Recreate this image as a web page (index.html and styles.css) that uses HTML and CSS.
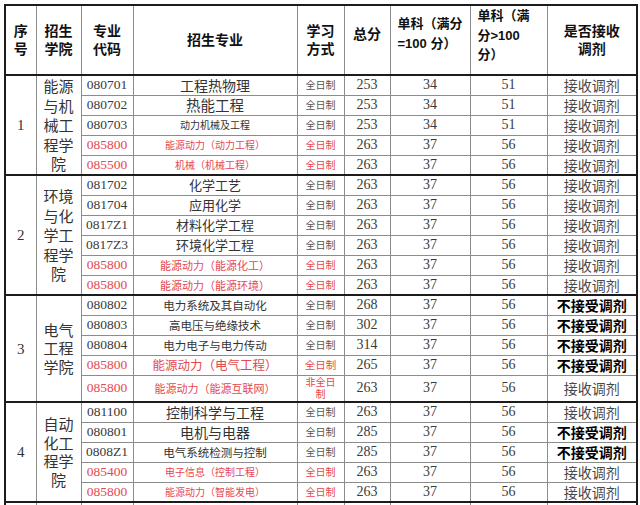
FILE: index.html
```html
<!DOCTYPE html>
<html lang="zh">
<head>
<meta charset="utf-8">
<title>招生专业调剂表</title>
<link rel="stylesheet" href="styles.css">
</head>
<body>
<table class="t">
  <colgroup>
    <col class="c1"><col class="c2"><col class="c3"><col class="c4"><col class="c5"><col class="c6"><col class="c7"><col class="c8"><col class="c9">
  </colgroup>
  <thead>
    <tr class="hd">
      <th>序<br>号</th>
      <th>招生<br>学院</th>
      <th>专业<br>代码</th>
      <th>招生专业</th>
      <th>学习<br>方式</th>
      <th class="top total">总分</th>
      <th class="top left sm two-l">单科（满分<br>=100 分）</th>
      <th class="top left sm three-l">单科（满<br>分&gt;100<br>分）</th>
      <th>是否接收<br>调剂</th>
    </tr>
  </thead>
  <tbody>
    <tr class="g">
      <td rowspan="5" class="no">1</td>
      <td rowspan="5" class="col">能源<br>与机<br>械工<br>程学<br>院</td>
      <td class="code">080701</td><td class="f14">工程热物理</td><td class="way">全日制</td><td class="num">253</td><td class="num">34</td><td class="num">51</td><td class="acc">接收调剂</td>
    </tr>
    <tr>
      <td class="code">080702</td><td class="f145">热能工程</td><td class="way">全日制</td><td class="num">253</td><td class="num">34</td><td class="num">51</td><td class="acc">接收调剂</td>
    </tr>
    <tr>
      <td class="code">080703</td><td class="f10">动力机械及工程</td><td class="way">全日制</td><td class="num">253</td><td class="num">34</td><td class="num">51</td><td class="acc">接收调剂</td>
    </tr>
    <tr>
      <td class="code red">085800</td><td class="f10 red">能源动力（动力工程）</td><td class="way red">全日制</td><td class="num">263</td><td class="num">37</td><td class="num">56</td><td class="acc">接收调剂</td>
    </tr>
    <tr>
      <td class="code red">085500</td><td class="f10 red">机械（机械工程）</td><td class="way red">全日制</td><td class="num">263</td><td class="num">37</td><td class="num">56</td><td class="acc">接收调剂</td>
    </tr>

    <tr class="g">
      <td rowspan="6" class="no">2</td>
      <td rowspan="6" class="col">环境<br>与化<br>学工<br>程学<br>院</td>
      <td class="code">081702</td><td class="f13">化学工艺</td><td class="way">全日制</td><td class="num">263</td><td class="num">37</td><td class="num">56</td><td class="acc">接收调剂</td>
    </tr>
    <tr>
      <td class="code">081704</td><td class="f13">应用化学</td><td class="way">全日制</td><td class="num">263</td><td class="num">37</td><td class="num">56</td><td class="acc">接收调剂</td>
    </tr>
    <tr>
      <td class="code">0817Z1</td><td class="f13">材料化学工程</td><td class="way">全日制</td><td class="num">263</td><td class="num">37</td><td class="num">56</td><td class="acc">接收调剂</td>
    </tr>
    <tr>
      <td class="code">0817Z3</td><td class="f13">环境化学工程</td><td class="way">全日制</td><td class="num">263</td><td class="num">37</td><td class="num">56</td><td class="acc">接收调剂</td>
    </tr>
    <tr>
      <td class="code red">085800</td><td class="f11 red">能源动力（能源化工）</td><td class="way red">全日制</td><td class="num">263</td><td class="num">37</td><td class="num">56</td><td class="acc">接收调剂</td>
    </tr>
    <tr>
      <td class="code red">085800</td><td class="f11 red">能源动力（能源环境）</td><td class="way red">全日制</td><td class="num">263</td><td class="num">37</td><td class="num">56</td><td class="acc">接收调剂</td>
    </tr>

    <tr class="g">
      <td rowspan="5" class="no">3</td>
      <td rowspan="5" class="col c3g">电气<br>工程<br>学院</td>
      <td class="code">080802</td><td class="f115">电力系统及其自动化</td><td class="way">全日制</td><td class="num">268</td><td class="num">37</td><td class="num">56</td><td class="rej">不接受调剂</td>
    </tr>
    <tr>
      <td class="code">080803</td><td class="f115">高电压与绝缘技术</td><td class="way">全日制</td><td class="num">302</td><td class="num">37</td><td class="num">56</td><td class="rej">不接受调剂</td>
    </tr>
    <tr>
      <td class="code">080804</td><td class="f115">电力电子与电力传动</td><td class="way">全日制</td><td class="num">314</td><td class="num">37</td><td class="num">56</td><td class="rej">不接受调剂</td>
    </tr>
    <tr>
      <td class="code red">085800</td><td class="f125 red">能源动力（电气工程）</td><td class="way red wb">全日制</td><td class="num">265</td><td class="num">37</td><td class="num">56</td><td class="rej">不接受调剂</td>
    </tr>
    <tr class="tall">
      <td class="code red">085800</td><td class="f11 red">能源动力（能源互联网）</td><td class="way red two">非全日<br>制</td><td class="num">263</td><td class="num">37</td><td class="num">56</td><td class="acc">接收调剂</td>
    </tr>

    <tr class="g">
      <td rowspan="5" class="no">4</td>
      <td rowspan="5" class="col c4g">自动<br>化工<br>程学<br>院</td>
      <td class="code">081100</td><td class="f14">控制科学与工程</td><td class="way">全日制</td><td class="num">263</td><td class="num">37</td><td class="num">56</td><td class="acc">接收调剂</td>
    </tr>
    <tr>
      <td class="code">080801</td><td class="f14">电机与电器</td><td class="way">全日制</td><td class="num">285</td><td class="num">37</td><td class="num">56</td><td class="rej">不接受调剂</td>
    </tr>
    <tr>
      <td class="code">0808Z1</td><td class="f115">电气系统检测与控制</td><td class="way">全日制</td><td class="num">285</td><td class="num">37</td><td class="num">56</td><td class="rej">不接受调剂</td>
    </tr>
    <tr>
      <td class="code red">085400</td><td class="f10 red">电子信息（控制工程）</td><td class="way red">全日制</td><td class="num">263</td><td class="num">37</td><td class="num">56</td><td class="acc">接收调剂</td>
    </tr>
    <tr>
      <td class="code red">085800</td><td class="f10 red">能源动力（智能发电）</td><td class="way red">全日制</td><td class="num">263</td><td class="num">37</td><td class="num">56</td><td class="acc">接收调剂</td>
    </tr>

    <tr class="g">
      <td></td><td></td><td></td><td></td><td></td><td></td><td></td><td></td><td></td>
    </tr>
  </tbody>
</table>
</body>
</html>
```
FILE: styles.css
```css
html, body {
  margin: 0;
  padding: 0;
  background: #ffffff;
}

.t {
  border-collapse: collapse;
  table-layout: fixed;
  width: 633px;
  margin: 4px 0 0 4px;
  border: 2px solid #1c1c1c;
  font-family: "Liberation Serif", "Noto Sans CJK SC", serif;
  color: #3a3a3a;
}

.c1 { width: 31px; }
.c2 { width: 45px; }
.c3 { width: 52px; }
.c4 { width: 164px; }
.c5 { width: 47px; }
.c6 { width: 46px; }
.c7 { width: 80px; }
.c8 { width: 77px; }
.c9 { width: 90px; }

.t th,
.t td {
  border: 1px solid #8c8c8c;
  padding: 0;
  text-align: center;
  vertical-align: middle;
  white-space: nowrap;
  overflow: hidden;
}

.t td {
  line-height: 16px;
}

.hd {
  height: 70px;
}

.t th {
  font-family: "Liberation Sans", "Noto Sans CJK SC", sans-serif;
  font-weight: bold;
  font-size: 14px;
  line-height: 18.5px;
  color: #111111;
  border-bottom: 1px solid #4a4a4a;
}

.t th.top {
  vertical-align: top;
}

.t th.total {
  line-height: 20px;
  padding-top: 18px;
}

.t th.left {
  text-align: left;
}

.t th.sm {
  font-size: 13px;
  padding-left: 7px;
}

.t th.two-l {
  line-height: 20px;
  padding-top: 8px;
}

.t th.three-l {
  line-height: 19.5px;
  padding-top: 0;
}

.t tbody tr {
  height: 20px;
}

.t tbody tr.tall {
  height: 27px;
}

.t tr.g td {
  border-top: 2px solid #1c1c1c;
}

.t td.no {
  font-size: 15px;
  color: #333333;
}

.t td.col {
  font-family: "Noto Sans CJK SC", sans-serif;
  font-size: 15px;
  line-height: 19.5px;
  color: #333333;
}

.t td.c3g,
.t td.c4g {
  line-height: 18.5px;
}

.code {
  font-size: 13.5px;
  color: #3a3a3a;
}

.num {
  font-size: 14px;
  color: #3a3a3a;
}

.way {
  font-family: "Noto Sans CJK SC", sans-serif;
  font-size: 10px;
  color: #555555;
}

.way.wb {
  font-size: 10.5px;
}

.t td.two {
  line-height: 12.5px;
}

.acc {
  font-family: "Noto Sans CJK SC", sans-serif;
  font-size: 14px;
  color: #484848;
}

.rej {
  font-family: "Noto Sans CJK SC", sans-serif;
  font-size: 14px;
  font-weight: bold;
  color: #000000;
}

.f14, .f145, .f13, .f125, .f115, .f11, .f10 {
  font-family: "Noto Sans CJK SC", sans-serif;
  color: #333333;
}

.f145 { font-size: 14.5px; }
.f14 { font-size: 14px; }
.f13 { font-size: 13px; }
.f125 { font-size: 12.5px; }
.f115 { font-size: 11.5px; }
.f11 { font-size: 11px; }
.f10 { font-size: 10px; }

.t .red {
  color: #e5474f;
}
```
